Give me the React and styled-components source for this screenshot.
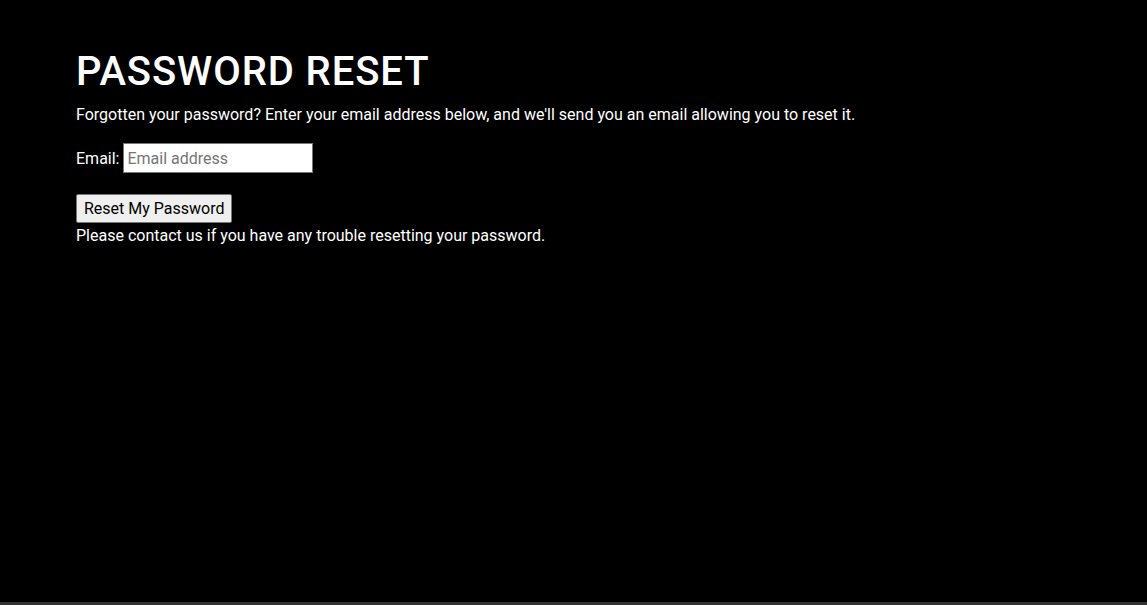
import React from 'react'
import styled, { createGlobalStyle } from 'styled-components'

const Global = createGlobalStyle`
  html, body {
    margin: 0;
    background: #000;
    height: 100%;
  }
  body {
    font-family: Roboto, "Liberation Sans", sans-serif;
    color: #fff;
  }
`

const Page = styled.main`
  padding: 48px 76px 0;
  min-height: 605px;
  box-sizing: border-box;
`

const Title = styled.h1`
  font-size: 40px;
  font-weight: 500;
  margin: 0 0 10px;
  line-height: 47px;
  letter-spacing: 0.9px;
`

const Text = styled.p`
  font-size: 16px;
  line-height: 19px;
  margin: 0 0 ${p => p.$gap || 0}px;
`

const Field = styled.label`
  display: flex;
  align-items: center;
  gap: 4px;
  font-size: 16px;
  margin-bottom: 21px;
  margin-top: -1px;
`

const Input = styled.input`
  width: 190px;
  height: 30px;
  box-sizing: border-box;
  border: 1px solid #767676;
  padding: 1px 3px;
  font-family: Roboto, "Liberation Sans", sans-serif;
  font-size: 16px;
  &::placeholder { color: #757575; }
`

const Button = styled.button`
  display: block;
  height: 29px;
  padding: 1px 7px;
  font-family: Roboto, "Liberation Sans", sans-serif;
  font-size: 16px;
  color: #000;
  background: #efefef;
  border: 1px solid #767676;
  border-radius: 2px;
  margin-bottom: 3px;
`

const BottomBar = styled.div`
  position: fixed;
  left: 0;
  right: 0;
  bottom: 0;
  height: 3px;
  background: #333;
`

export default function App() {
  return (
    <>
      <Global />
      <Page>
        <Title>PASSWORD RESET</Title>
        <Text $gap={20}>Forgotten your password? Enter your email address below, and we'll send you an email allowing you to reset it.</Text>
        <Field>
          Email:
          <Input type="email" placeholder="Email address" />
        </Field>
        <Button>Reset My Password</Button>
        <Text>Please contact us if you have any trouble resetting your password.</Text>
      </Page>
      <BottomBar />
    </>
  )
}
